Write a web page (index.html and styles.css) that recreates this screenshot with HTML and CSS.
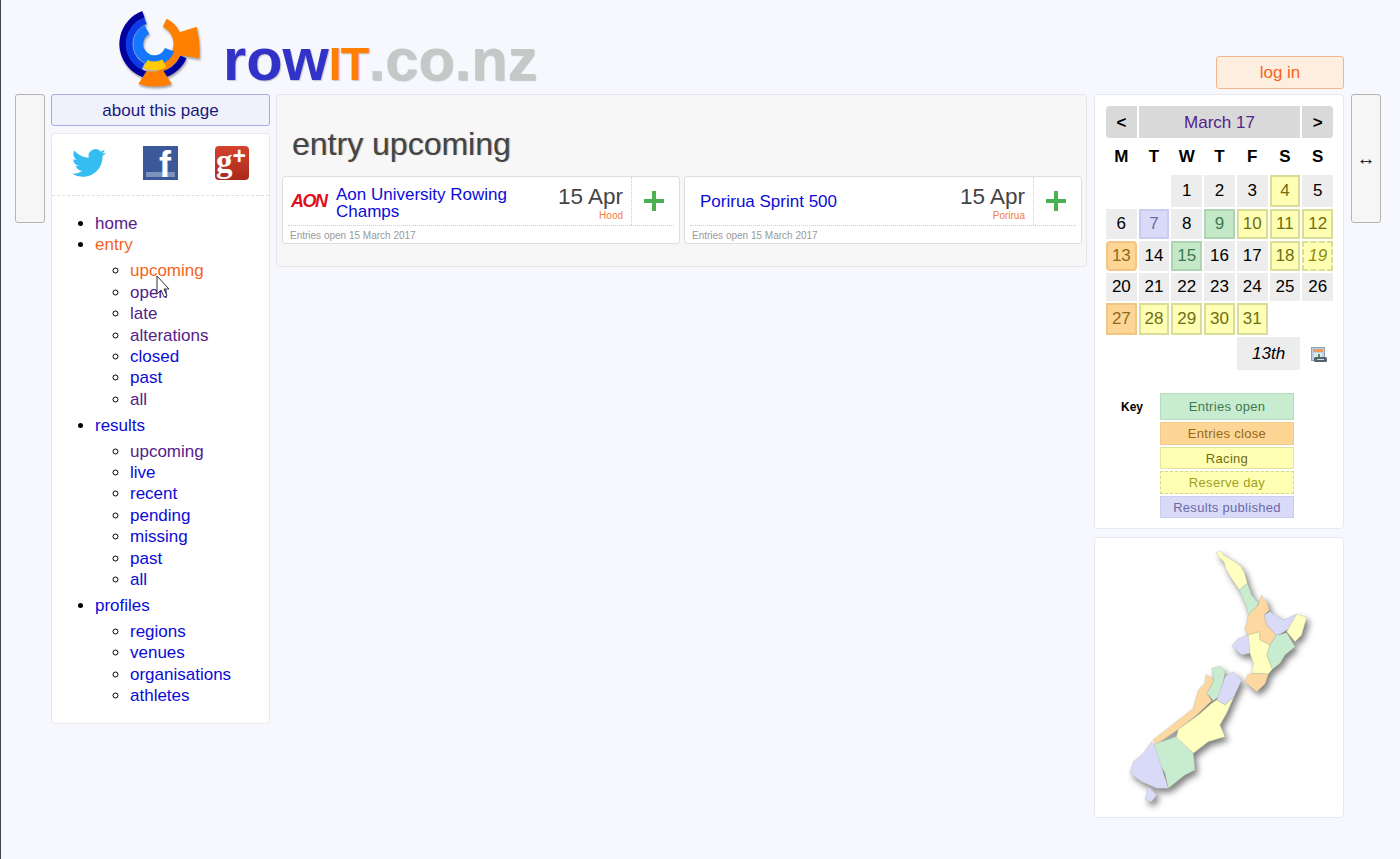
FILE: index.html
```html
<!DOCTYPE html>
<html lang="en">
<head>
    <meta charset="UTF-8">
    <title>rowIT.co.nz - entry upcoming</title>
    <link rel="stylesheet" href="styles.css">
</head>
<body>
    <header class="top">
        <svg class="logo" viewBox="0 0 120 100" width="120" height="100">
            <g class="logo-art" fill="none">
                <path d="M43.4 14.2 A31.75 31.75 0 1 0 83.5 56.9" stroke="#00009c" stroke-width="6.8"/>
                <path d="M45.5 20.7 A25 25 0 0 0 43 66.5" stroke="#0a3ce8" stroke-width="6.8"/>
                <path d="M64.6 22.8 A23.5 23.5 0 0 1 56.7 67.4" stroke="#ff8000" stroke-width="9"/>
                <path d="M46.9 29.7 A16.2 16.2 0 1 0 69.6 49.8" stroke="#1478ff" stroke-width="10"/>
                <path d="M45.5 64 A22 22 0 0 0 64.4 63.6" stroke="#ffcc00" stroke-width="9"/>
                <path d="M46.7 70.7 Q55 72.5 63.3 70.7 L71.7 84 Q55 89 38.3 84 Z" fill="#ff8000"/>
                <path d="M78 32.7 L96.7 26.7 Q100.5 42 99.3 58.3 L78 55 Z" fill="#ff8000"/>
            </g>
        </svg>
        <div class="wordmark"><span class="wm-row">row</span><span class="wm-it">IT</span><span class="wm-nz">.co.nz</span></div>
        <a class="login" href="#">log in</a>
    </header>

    <div class="layout">
        <div class="side-tab"></div>

        <div class="left-col">
            <a class="about" href="#">about this page</a>
            <nav class="card menu">
                <div class="social">
                    <svg class="bird" viewBox="0 0 24 24" width="34" height="34"><path d="M23.953 4.57a10 10 0 01-2.825.775 4.958 4.958 0 002.163-2.723c-.951.555-2.005.959-3.127 1.184a4.92 4.92 0 00-8.384 4.482C7.69 8.095 4.067 6.13 1.64 3.162a4.822 4.822 0 00-.666 2.475c0 1.71.87 3.213 2.188 4.096a4.904 4.904 0 01-2.228-.616v.06a4.923 4.923 0 003.946 4.827 4.996 4.996 0 01-2.212.085 4.936 4.936 0 004.604 3.417 9.867 9.867 0 01-6.102 2.105c-.39 0-.779-.023-1.17-.067a13.995 13.995 0 007.557 2.209c9.053 0 13.998-7.496 13.998-13.985 0-.21 0-.42-.015-.63A9.935 9.935 0 0024 4.59z"/></svg>
                    <div class="fb">f</div>
                    <div class="gplus">g<span>+</span></div>
                </div>
                <ul class="tree">
                    <li><a class="seen" href="#">home</a></li>
                    <li><a class="on" href="#">entry</a>
                        <ul>
                            <li><a class="on" href="#">upcoming</a></li>
                            <li><a class="seen" href="#">open</a></li>
                            <li><a class="seen" href="#">late</a></li>
                            <li><a class="seen" href="#">alterations</a></li>
                            <li><a href="#">closed</a></li>
                            <li><a href="#">past</a></li>
                            <li><a class="seen" href="#">all</a></li>
                        </ul>
                    </li>
                    <li><a href="#">results</a>
                        <ul>
                            <li><a class="seen" href="#">upcoming</a></li>
                            <li><a href="#">live</a></li>
                            <li><a href="#">recent</a></li>
                            <li><a href="#">pending</a></li>
                            <li><a href="#">missing</a></li>
                            <li><a href="#">past</a></li>
                            <li><a href="#">all</a></li>
                        </ul>
                    </li>
                    <li><a href="#">profiles</a>
                        <ul>
                            <li><a href="#">regions</a></li>
                            <li><a href="#">venues</a></li>
                            <li><a href="#">organisations</a></li>
                            <li><a href="#">athletes</a></li>
                        </ul>
                    </li>
                </ul>
            </nav>
        </div>

        <main class="panel">
            <h1>entry upcoming</h1>
            <div class="events">
                <div class="event">
                    <div class="event-top">
                        <span class="aon">AON</span>
                        <a class="event-name two-line" href="#">Aon University Rowing Champs</a>
                        <div class="event-date">15 Apr<small>Hood</small></div>
                        <div class="event-add">
                            <svg viewBox="0 0 20 20" width="20" height="20"><path d="M8 0h4v8h8v4h-8v8H8v-8H0V8h8z"/></svg>
                        </div>
                    </div>
                    <div class="event-foot">Entries open 15 March 2017</div>
                </div>
                <div class="event">
                    <div class="event-top">
                        <a class="event-name no-logo" href="#">Porirua Sprint 500</a>
                        <div class="event-date">15 Apr<small>Porirua</small></div>
                        <div class="event-add">
                            <svg viewBox="0 0 20 20" width="20" height="20"><path d="M8 0h4v8h8v4h-8v8H8v-8H0V8h8z"/></svg>
                        </div>
                    </div>
                    <div class="event-foot">Entries open 15 March 2017</div>
                </div>
            </div>
        </main>

        <aside class="right-col">
            <div class="card cal-card">
                <div class="cal">
                    <div class="nav first">&lt;</div>
                    <div class="nav month">March 17</div>
                    <div class="nav last">&gt;</div>

                    <b>M</b><b>T</b><b>W</b><b>T</b><b>F</b><b>S</b><b>S</b>

                    <span></span><span></span>
                    <div class="d">1</div><div class="d">2</div><div class="d">3</div><div class="d race">4</div><div class="d">5</div>
                    <div class="d">6</div><div class="d pub">7</div><div class="d">8</div><div class="d open">9</div><div class="d race">10</div><div class="d race">11</div><div class="d race">12</div>
                    <div class="d close today">13</div><div class="d">14</div><div class="d open">15</div><div class="d">16</div><div class="d">17</div><div class="d race">18</div><div class="d reserve">19</div>
                    <div class="d">20</div><div class="d">21</div><div class="d">22</div><div class="d">23</div><div class="d">24</div><div class="d">25</div><div class="d">26</div>
                    <div class="d close">27</div><div class="d race">28</div><div class="d race">29</div><div class="d race">30</div><div class="d race">31</div><span></span><span></span>

                    <div class="d selected">13th</div>
                    <div class="cal-icon">
                        <svg viewBox="0 0 16 16" width="16" height="16">
                            <rect x="0.5" y="0.5" width="13" height="13" fill="#bcd2e2" stroke="#8aa4b6"/>
                            <rect x="2" y="2" width="10" height="3" fill="#f09a60"/>
                            <path d="M3 7h8M3 9h8" stroke="#fff"/>
                            <path d="M8 7v3" stroke="#4c9a5a" stroke-width="2"/>
                            <rect x="3" y="10" width="13" height="5" rx="1.5" fill="#55636e"/>
                            <path d="M6 12.5h7" stroke="#d5dde3"/>
                        </svg>
                    </div>
                </div>
                <div class="key">
                    <strong>Key</strong>
                    <div class="key-list">
                        <div class="k k-open">Entries open</div>
                        <div class="k k-close">Entries close</div>
                        <div class="k k-race">Racing</div>
                        <div class="k k-reserve">Reserve day</div>
                        <div class="k k-pub">Results published</div>
                    </div>
                </div>
            </div>
            <div class="card map-card">
                <svg class="nz" viewBox="0 0 630 810" width="210" height="270">
                    <g stroke="#b4b4a0" stroke-width="1" stroke-linejoin="round">
                        <polygon class="yel" points="318,38 332,32 340,45 352,52 375,66 392,78 404,100 412,130 388,150 376,132 362,112 348,88 342,65 330,55"/>
                        <polygon class="grn" points="388,150 412,130 425,165 445,190 440,200 415,225 408,195"/>
                        <polygon class="org" points="415,225 445,195 455,165 470,185 478,210 462,225 470,255 498,285 480,315 450,300 448,275 415,285 405,268"/>
                        <polygon class="pur" points="462,225 480,215 520,240 560,222 535,268 505,285 498,285 470,255"/>
                        <polygon class="yel" points="560,222 590,232 575,285 555,305 530,275"/>
                        <polygon class="grn" points="530,278 555,320 525,345 510,370 487,388 470,345 480,315 498,285 505,285"/>
                        <polygon class="pur" points="418,285 420,340 395,345 365,318 385,295"/>
                        <polygon class="yel" points="415,285 448,275 450,300 480,315 470,345 487,388 475,402 425,400 430,370 420,340"/>
                        <polygon class="org" points="425,400 475,402 465,432 440,455 405,425 412,405"/>
                        <polygon class="grn" points="305,385 330,378 345,395 340,425 325,470 310,482 290,460 312,420"/>
                        <polygon class="org" points="288,403 312,420 290,460 305,482 260,525 205,568 140,612 128,600 180,560 250,505 265,450 285,430"/>
                        <polygon class="pur" points="345,410 370,395 395,420 372,470 345,495 320,480 335,440"/>
                        <polygon class="yel" points="320,480 345,495 372,470 350,520 330,555 345,590 295,605 250,640 198,595 205,568 265,525 305,490"/>
                        <polygon class="grn" points="198,590 250,640 255,690 225,705 175,745 165,700 125,630 135,612"/>
                        <polygon class="pur" points="125,605 135,620 175,745 140,745 95,725 60,700 70,665 100,640"/>
                        <polygon class="pur" points="115,740 140,765 125,785 105,780"/>
                    </g>
                </svg>
            </div>
        </aside>

        <div class="side-tab wide-tab">&#8596;</div>
    </div>

    <!-- mouse pointer in the screenshot -->
    <svg class="pointer" viewBox="0 0 13 23" width="13" height="23"><path d="M1 1v18l4-4 3 7 3-1-3-7h5z"/></svg>
</body>
</html>
```

FILE: styles.css
```css
body {
    font-family: "Liberation Sans", Arial, sans-serif;
    background-color: #f7f8fe;
    border-left: 1px solid #444;
    margin: 0;
    min-height: 100vh;
    color: #000;
}
a {
    text-decoration: none;
    color: #0b0bd8;
}
a.seen {
    color: #55218b;
}
a.on {
    color: #f4641e;
}

/* header */
.top {
    display: flex;
    align-items: flex-start;
    height: 94px;
    padding: 0 55px 0 99px;
}
.logo {
    flex: none;
}
.logo-art {
    filter: drop-shadow(1px 2px 1px rgba(0, 0, 0, 0.35));
}
.wordmark {
    margin: 32px 0 0 3px;
    font-size: 59.5px;
    line-height: 56px;
    font-weight: bold;
    white-space: nowrap;
    text-shadow: 1px 1px 1px rgba(0, 0, 0, 0.2);
}
.wm-row {
    color: #3232c8;
}
.wm-it {
    color: #ff8000;
    font-size: 47px;
    letter-spacing: -1px;
}
.wm-nz {
    color: #c6c8c8;
}
.login {
    flex: none;
    box-sizing: border-box;
    width: 128px;
    height: 33px;
    margin: 56px 1px 0 auto;
    background-color: #feeee0;
    border: 1px solid #f5b58c;
    border-radius: 3px;
    color: #f4641e;
    font-size: 17px;
    line-height: 31px;
    text-align: center;
}

/* columns */
.layout {
    display: flex;
    align-items: flex-start;
    gap: 6px;
    padding-left: 14px;
}
.side-tab {
    flex: none;
    box-sizing: border-box;
    width: 30px;
    height: 129px;
    background-color: #f6f6f6;
    border: 1px solid #b4b4b4;
    border-radius: 3px;
}
.wide-tab {
    margin-left: 1px;
    font-size: 19px;
    line-height: 127px;
    text-align: center;
}
.card {
    box-sizing: border-box;
    background-color: #fff;
    border: 1px solid #e8e8f0;
    border-radius: 4px;
}

/* left menu */
.left-col {
    flex: none;
    width: 219px;
}
.about {
    display: block;
    box-sizing: border-box;
    height: 32px;
    background-color: #f0f1fb;
    border: 1px solid #a9a9dd;
    border-radius: 3px;
    color: #1a1a80;
    font-size: 17px;
    line-height: 32px;
    text-align: center;
}
.menu {
    height: 591px;
    margin-top: 7px;
}
.social {
    display: flex;
    align-items: center;
    gap: 37px;
    box-sizing: border-box;
    height: 62px;
    padding: 0 0 3px 20px;
    border-bottom: 1px dashed #ddd;
}
.bird {
    fill: #35bdf2;
}
.fb {
    box-sizing: border-box;
    width: 35px;
    height: 34px;
    padding: 3px 7px 0 0;
    background: linear-gradient(#7d92bd, #7d92bd) center 26px / 29px 5px no-repeat, #3b5998;
    color: #fff;
    font-size: 36px;
    font-weight: bold;
    line-height: 31px;
    text-align: right;
}
.gplus {
    box-sizing: border-box;
    width: 34px;
    height: 34px;
    padding-left: 1px;
    background: linear-gradient(#d2432f, #a92a1c);
    border-radius: 4px;
    color: #fff;
    font-family: "Liberation Serif", serif;
    font-size: 33px;
    font-weight: bold;
    line-height: 29px;
    white-space: nowrap;
}
.gplus span {
    font-family: "Liberation Sans", sans-serif;
    font-size: 23px;
    line-height: 20px;
    vertical-align: 8px;
}
.tree {
    margin: 17px 0 0;
    padding-left: 43px;
    font-size: 17px;
    line-height: 21.4px;
}
.tree ul {
    margin: 4.5px 0;
    padding-left: 35px;
}

/* main panel */
.panel {
    flex: none;
    box-sizing: border-box;
    width: 811px;
    height: 173px;
    padding: 0 4px 0 5px;
    background-color: #f7f7f7;
    border: 1px solid #e6e6ec;
    border-radius: 4px;
}
h1 {
    margin: 0;
    padding: 30px 0 0 10px;
    height: 51px;
    color: #444;
    font-size: 32px;
    font-weight: normal;
    line-height: 38px;
    text-shadow: 1px 0 1px rgba(0, 0, 0, 0.3);
}
.events {
    display: flex;
    gap: 4px;
}
.event {
    flex: 1;
    box-sizing: border-box;
    height: 68px;
    background-color: #fff;
    border: 1px solid #ddd;
    border-radius: 3px;
}
.event-top {
    display: flex;
    align-items: center;
    height: 48px;
    margin: 0 5px;
    border-bottom: 1px dotted #ccc;
}
.aon {
    flex: none;
    width: 35px;
    margin: 0 10px 0 3px;
    color: #e01020;
    font-size: 18px;
    font-style: italic;
    font-weight: bold;
    letter-spacing: -1.5px;
}
.event-name {
    flex: 1;
    font-size: 17px;
    line-height: 17px;
    padding-right: 40px;
}
.two-line {
    padding-top: 4px;
}
.no-logo {
    padding-left: 10px;
}
.event-date {
    flex: none;
    padding-right: 8px;
    color: #444;
    font-size: 22.5px;
    line-height: 24px;
    text-align: right;
}
.event-date small {
    display: block;
    margin-top: 2px;
    margin-bottom: -3px;
    color: #f08040;
    font-size: 10px;
    line-height: 10px;
}
.event-add {
    flex: none;
    display: flex;
    align-items: center;
    justify-content: center;
    width: 42px;
    height: 48px;
    border-left: 1px dotted #ccc;
}
.event-add svg {
    margin-left: 2px;
    fill: #4caf50;
}
.event-foot {
    padding: 3px 0 0 7px;
    color: #999;
    font-size: 10px;
    line-height: 13px;
}

/* calendar */
.right-col {
    flex: none;
    width: 250px;
    margin-left: 1px;
}
.cal-card {
    height: 435px;
    padding: 11px 10px 0 11px;
}
.cal {
    display: grid;
    grid-template-columns: repeat(7, 1fr);
    grid-template-rows: 32px 33px 32px 30px 30px 28px 32px 33px;
    gap: 2px;
    width: 227px;
    font-size: 17px;
    text-align: center;
}
.cal b {
    font-size: 17px;
    line-height: 33px;
}
.nav {
    background-color: #d9d9d9;
    font-weight: bold;
    line-height: 33px;
}
.first {
    border-radius: 4px 0 0 4px;
}
.last {
    border-radius: 0 4px 4px 0;
}
.month {
    grid-column: span 5;
    color: #55218b;
    font-weight: normal;
}
.d {
    display: flex;
    align-items: center;
    justify-content: center;
    box-sizing: border-box;
    background-color: #ededed;
}
.race {
    background-color: #ffffb4;
    border: 2px solid #dcdc9a;
    color: #6e6e10;
}
.open {
    background-color: #c4e8c8;
    border: 2px solid #aed4b2;
    color: #3e7a50;
}
.close {
    background-color: #fdd696;
    border: 2px solid #f0c684;
    color: #8c6a20;
}
.today {
    border-radius: 4px;
}
.pub {
    background-color: #d8daf8;
    border: 2px solid #c8caf0;
    color: #6a6aa8;
}
.reserve {
    background-color: #ffffb4;
    border: 2px dashed #dcdc9a;
    color: #8c8c10;
    font-style: italic;
}
.selected {
    grid-column: 5 / span 2;
    font-style: italic;
}
.cal-icon {
    display: flex;
    align-items: center;
    justify-content: center;
    padding: 3px 0 0 3px;
}

/* key */
.key {
    display: flex;
    margin: 23px 0 0 15px;
}
.key strong {
    width: 39px;
    font-size: 12px;
    line-height: 28px;
}
.key-list {
    display: flex;
    flex-direction: column;
    gap: 2px;
    width: 134px;
}
.k {
    box-sizing: border-box;
    font-size: 13px;
    letter-spacing: 0.3px;
    line-height: 21px;
    text-align: center;
}
.k-open {
    height: 27px;
    line-height: 25px;
    background-color: #c8ecd0;
    border: 1px solid #b6dcbe;
    color: #3e7a50;
}
.k-close {
    height: 23px;
    background-color: #fdd696;
    border: 1px solid #f2ca8a;
    color: #966818;
}
.k-race {
    height: 22px;
    background-color: #ffffb4;
    border: 1px solid #e4e49c;
    color: #6e6e10;
}
.k-reserve {
    height: 23px;
    background-color: #ffffb4;
    border: 1px dashed #d4d48c;
    color: #a0a020;
}
.k-pub {
    height: 22px;
    background-color: #d8daf8;
    border: 1px solid #cccef0;
    color: #6a6aa8;
}

/* map */
.map-card {
    height: 281px;
    margin-top: 8px;
    padding: 2px 0 0 15px;
}
.nz {
    display: block;
    filter: drop-shadow(3px 4px 3px rgba(0, 0, 0, 0.5));
}
.yel {
    fill: #ffffc0;
}
.grn {
    fill: #c8ecd0;
}
.org {
    fill: #fdd8a0;
}
.pur {
    fill: #d8daf8;
}

.pointer {
    position: absolute;
    left: 156px;
    top: 275px;
    fill: #fff;
    stroke: #333;
    stroke-width: 1;
}
```
